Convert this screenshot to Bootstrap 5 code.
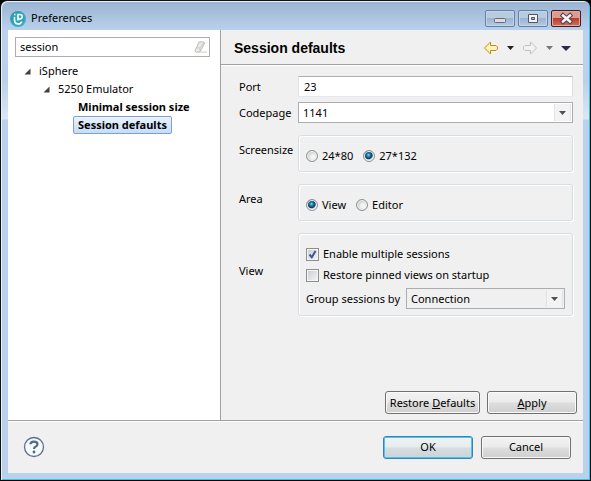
<!DOCTYPE html>
<html lang="en">
<head>
<meta charset="utf-8">
<meta name="viewport" content="width=device-width, initial-scale=1">
<title>Preferences</title>
<link href="https://cdn.jsdelivr.net/npm/bootstrap@5.3.0/dist/css/bootstrap.min.css" rel="stylesheet">
<style>
  body { font: 11px/16px "Noto Sans", "Open Sans", sans-serif; color: #000; background: #000; }
  .window-frame { border: 1px solid #111; border-bottom-color: #000; border-radius: 7px 7px 0 0; padding: 0 7px 7px;
    background: linear-gradient(#9ab3d2 0, #bad2ec 30px, #b9d1ea 80px, #dbe7f5 118px, #b9d1ea 119px);
    box-shadow: inset 1px 1px #e8f1fa, inset -1px -1px #35c4e4; }
  .title-bar { height: 29px; padding: 9px 2px 0 1px; }
  .caption-set { gap: 3px; }
  .caption-btn { width: 30px; height: 17px; padding: 0; border: 1px solid #6580a2; border-radius: 2px;
    background: linear-gradient(#b9cbe1 0 45%, #9cb4d1 50%, #b4cae4); box-shadow: inset 0 0 0 1px #c3d5ea; }
  .caption-btn.closer { border-color: #4c1720; background: linear-gradient(#dc9c90 0 45%, #bb3e2c 50%, #d2705a); box-shadow: inset 0 0 0 1px #e3aba0; }
  .caption-btn svg, .tool-btn svg { display: block; margin: auto; }
  .tree-pane { width: 213px; background: #fff; border-right: 1px solid #a0a0a0; padding: 7px 10px 0 7px; }
  .filter-box { height: 20px; border: 1px solid #abadb3; padding: 0 2px 0 4px; }
  .filter-box input { border: 0; outline: 0; padding: 0; width: 100%; min-width: 0; }
  .tree-pane ul { list-style: none; margin: 0; padding: 0; }
  .tree-pane ul ul { padding-left: 19px; }
  .tree-row { height: 18px; gap: 4px; }
  .tree-row a { color: #000; text-decoration: none; }
  .tree-pane .tree-root { padding: 5px 0 0 9px; }
  .leaf { margin-left: 11px; padding: 0 4px; border: 1px solid transparent; border-radius: 2px; font-weight: 700; white-space: nowrap; }
  .leaf.chosen { border-color: #7da2ce; background: linear-gradient(#ebf3fd, #c6dcf8); }
  .page-pane, .dialog-foot { background: #f0f0f0; }
  .page-head { height: 35px; padding: 2px 12px 0 13px; border-bottom: 1px solid #a0a0a0; box-shadow: 0 1px #fff; }
  .page-head h1 { font: 700 14px/18px "Liberation Sans", sans-serif; margin: 0; }
  .tool-btn { border: 0; background: none; padding: 0; height: 16px; }
  .settings { display: grid; grid-template-columns: 59px 1fr; row-gap: 12px; padding: 11px 10px 0 18px; align-items: center; }
  .settings .codepage { margin-top: -7px; }
  .group-name { padding-bottom: 7px; }
  .win-input, .win-select { height: 21px; border: 1px solid #abadb3; border-radius: 0; background-color: #fff; color: #000; width: 100%; }
  .win-input { border-color: #abadb3 #dbdfe6 #e3e9ef #e2e3ea; border-radius: 1px; padding: 0 5px; }
  .win-select { appearance: none; padding: 0 20px 0 4px;
    background-image: url("data:image/svg+xml,%3Csvg xmlns='http://www.w3.org/2000/svg' width='17' height='17'%3E%3Cpath d='M1 0h15v17H1z' fill='%23f3f3f3'/%3E%3Cpath d='M.5 0v17M16.5 0v17' stroke='%23e2e3e6'/%3E%3Cpath d='M5 7h7L8.500 11z' fill='%23505050'/%3E%3C/svg%3E");
    background-repeat: no-repeat; background-position: right 1px center; }
  .win-select.flat { background-color: #f0f0f0; width: 159px; }
  .group-box { border: 1px solid #d5dfe5; border-radius: 3px; box-shadow: inset 1px 1px #fff, 1px 1px #fff; padding: 4px 7px 0; min-height: 37px; }
  .group-box.radios { gap: 10px; }
  .group-box.stacked { gap: 5px; padding: 12px 7px 6px; }
  .pick { display: flex; align-items: center; gap: 4px; white-space: nowrap; }
  .pick input { appearance: none; width: 12px; height: 12px; margin: 0; border: 1px solid #8e8f8f; flex: none; }
  .pick input[type=radio] { border-radius: 50%; background: radial-gradient(circle at 60% 60%, #f4f4f4 20%, #c9cdd1 65%); box-shadow: inset 0 0 0 1px #f4f4f4; }
  .pick input[type=radio]:checked { background: radial-gradient(circle at 45% 40%, #8fe0f5 0, #237fae 20%, #123b5c 45%, #c9d3db 58%, #f4f4f4 70%); }
  .pick input[type=checkbox] { width: 13px; height: 13px; background: linear-gradient(135deg, #c8ccd1, #f6f6f6); box-shadow: inset 0 0 0 1px #f4f4f4; }
  .pick input[type=checkbox]:checked { background: url("data:image/svg+xml,%3Csvg xmlns='http://www.w3.org/2000/svg' viewBox='0 0 11 11'%3E%3Cpath d='M2.500 5.500L4.800 8.300L8.500 2' fill='none' stroke='%23405499' stroke-width='2'/%3E%3C/svg%3E"), linear-gradient(135deg, #c8ccd1, #f6f6f6); }
  .win-btn { width: 90px; height: 23px; padding: 0; border: 1px solid #707070; border-radius: 3px; color: #000; white-space: nowrap;
    background: linear-gradient(#f2f2f2 0, #ebebeb 48%, #dddddd 52%, #cfcfcf); box-shadow: inset 0 0 0 1px #fafafa; }
  .win-btn.wider { width: 95px; }
  .win-btn.primary { border-color: #3c7fb1; box-shadow: inset 0 0 0 1px #48c8f0; background: linear-gradient(#eef2f3 0, #e6ecee 48%, #d6dee1 52%, #cbd3d6); }
  .page-actions { padding: 0 6px 6px; gap: 7px; }
  .dialog-foot { border-top: 1px solid #a0a0a0; box-shadow: inset 0 1px #fff; height: 53px; padding: 0 12px 0 15px; }
</style>
</head>
<body>
<div class="window-frame d-flex flex-column min-vh-100">
  <header class="title-bar d-flex justify-content-between">
    <div class="d-flex gap-1">
      <svg width="18" height="18" viewBox="0 0 18 18" aria-hidden="true"><defs><radialGradient id="orb" cx=".45" cy=".4"><stop offset="0" stop-color="#38aebe"/><stop offset=".75" stop-color="#249fb2"/><stop offset="1" stop-color="#3aaec0"/></radialGradient></defs><circle cx="9" cy="9" r="8" fill="url(#orb)"/><path d="M5.500 7v3.200a3.700 3.700 0 0 0 7.200 1.200M9 10.500V4.500h2a2.200 2.200 0 0 1 0 4.500H9" fill="none" stroke="#fff" stroke-width="1.600"/><path d="M5 4.500h1.500" stroke="#fff" stroke-width="1.500"/></svg>
      <span>Preferences</span>
    </div>
    <div class="caption-set d-flex">
      <button class="caption-btn" type="button" aria-label="Minimize"><svg width="12" height="13" viewBox="0 0 12 13"><rect x=".5" y="6.500" width="11" height="4" rx="1" fill="#dcdcdc" stroke="#656b78"/></svg></button>
      <button class="caption-btn" type="button" aria-label="Maximize"><svg width="12" height="13" viewBox="0 0 12 13"><path fill-rule="evenodd" d="M1.500 2.500h9v8h-9zM4.500 5.500v2h3v-2z" fill="#f2f2f2" stroke="#4e5668"/></svg></button>
      <button class="caption-btn closer" type="button" aria-label="Close"><svg width="13" height="13" viewBox="0 0 13 13"><path d="M3 3.500l7 6M10 3.500l-7 6" stroke="#4f4352" stroke-width="4.500" stroke-linecap="square"/><path d="M3 3.500l7 6M10 3.500l-7 6" stroke="#f4f4f4" stroke-width="2.500" stroke-linecap="square"/></svg></button>
    </div>
  </header>

  <div class="d-flex flex-grow-1">
    <nav class="tree-pane flex-shrink-0" aria-label="Preference pages">
      <div class="filter-box d-flex align-items-center">
        <input type="text" value="session" aria-label="Filter">
        <svg width="14" height="14" viewBox="0 0 14 14" aria-hidden="true"><path d="M5.500 1.500h5l1 1-3 6-2.500 4H2l-1-1.500 1.500-3z" fill="#eeece8" stroke="#b5b3af"/><path d="M2.500 8h4l4-6M6.500 8v4" fill="none" stroke="#c6c4bf"/><path d="M7 12.500h6.500" stroke="#c6c4bf"/></svg>
      </div>
      <ul class="tree-root">
        <li>
          <div class="tree-row d-flex align-items-center"><svg width="7" height="7" viewBox="0 0 7 7"><path d="M6.500.5v6h-6z" fill="#404040"/></svg><a class="ms-1" href="#">iSphere</a></div>
          <ul>
            <li>
              <div class="tree-row d-flex align-items-center"><svg width="7" height="7" viewBox="0 0 7 7"><path d="M6.500.5v6h-6z" fill="#404040"/></svg><a class="ms-1" href="#">5250 Emulator</a></div>
              <ul>
                <li class="tree-row d-flex align-items-center"><a class="leaf" href="#">Minimal session size</a></li>
                <li class="tree-row d-flex align-items-center"><a class="leaf chosen" href="#" aria-current="page">Session defaults</a></li>
              </ul>
            </li>
          </ul>
        </li>
      </ul>
    </nav>

    <main class="page-pane flex-grow-1 d-flex flex-column">
      <div class="page-head d-flex align-items-center justify-content-between">
        <h1>Session defaults</h1>
        <div class="d-flex gap-2">
          <button class="tool-btn" type="button" aria-label="Back"><svg width="16" height="16" viewBox="0 0 16 16"><path d="M1.500 8L7.500 2v3.500H13l1.500 1.500v2L13 10.500H7.500V14z" fill="#fff1b8" stroke="#c58a1c"/></svg></button>
          <button class="tool-btn" type="button" aria-label="Back history"><svg width="7" height="16" viewBox="0 0 7 16"><path d="M0 6h7L3.500 10z" fill="#222"/></svg></button>
          <button class="tool-btn" type="button" aria-label="Forward"><svg width="16" height="16" viewBox="0 0 16 16"><path d="M14.500 8L8.500 2v3.500H3L1.500 7v2L3 10.500h5.500V14z" fill="#f2f2f2" stroke="#c1c1c1"/></svg></button>
          <button class="tool-btn" type="button" aria-label="Forward history"><svg width="7" height="16" viewBox="0 0 7 16"><path d="M0 6h7L3.500 10z" fill="#777"/></svg></button>
          <button class="tool-btn" type="button" aria-label="Menu"><svg width="10" height="16" viewBox="0 0 10 16"><path d="M0 6h10L5 11z" fill="#2b2750"/></svg></button>
        </div>
      </div>

      <form class="settings">
        <label for="port">Port</label>
        <input class="win-input" id="port" type="text" value="23">
        <label class="codepage" for="codepage">Codepage</label>
        <select class="win-select codepage" id="codepage"><option>1141</option></select>

        <span class="group-name" id="size-label">Screensize</span>
        <div class="group-box radios d-flex align-items-center" role="radiogroup" aria-labelledby="size-label">
          <label class="pick"><input type="radio" name="size">24*80</label>
          <label class="pick"><input type="radio" name="size" checked>27*132</label>
        </div>
        <span class="group-name" id="area-label">Area</span>
        <div class="group-box radios d-flex align-items-center" role="radiogroup" aria-labelledby="area-label">
          <label class="pick"><input type="radio" name="area" checked>View</label>
          <label class="pick"><input type="radio" name="area">Editor</label>
        </div>
        <span class="group-name" id="view-label">View</span>
        <div class="group-box stacked d-flex flex-column" role="group" aria-labelledby="view-label">
          <label class="pick"><input type="checkbox" checked>Enable multiple sessions</label>
          <label class="pick"><input type="checkbox">Restore pinned views on startup</label>
          <div class="d-flex align-items-center justify-content-between">
            <label for="grouping">Group sessions by</label>
            <select class="win-select flat" id="grouping"><option>Connection</option></select>
          </div>
        </div>
      </form>

      <div class="page-actions d-flex justify-content-end mt-auto">
        <button class="win-btn wider" type="button">Restore <u>D</u>efaults</button>
        <button class="win-btn" type="button"><u>A</u>pply</button>
      </div>
    </main>
  </div>

  <footer class="dialog-foot d-flex align-items-center">
    <button class="tool-btn h-auto me-auto" type="button" aria-label="Help"><svg width="22" height="22" viewBox="0 0 22 22"><circle cx="11" cy="11" r="9.500" fill="#f7f8fa" stroke="#5d7290" stroke-width="1.300"/><path d="M7.500 8.300Q7.500 5.700 11 5.700t3.500 2.600Q14.500 10 12.500 10.800 11 11.500 11 13" fill="none" stroke="#536a8b" stroke-width="2.200"/><circle cx="11" cy="16" r="1.400" fill="#536a8b"/></svg></button>
    <button class="win-btn primary me-2" type="button">OK</button>
    <button class="win-btn" type="button">Cancel</button>
  </footer>
</div>
<script src="https://cdn.jsdelivr.net/npm/bootstrap@5.3.0/dist/js/bootstrap.bundle.min.js"></script>
</body>
</html>
